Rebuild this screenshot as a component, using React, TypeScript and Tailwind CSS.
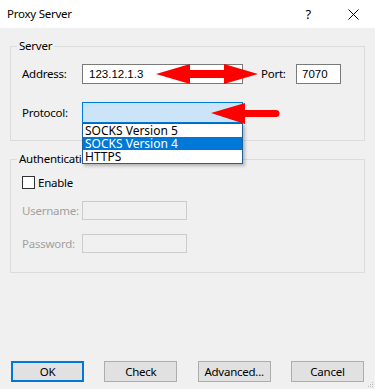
import React from 'react';

const font = { fontFamily: '"Noto Sans", "Open Sans", sans-serif' };
const fieldFont = { fontFamily: '"Liberation Sans", sans-serif' };

const Button: React.FC<{ label: string; primary?: boolean }> = ({ label, primary }) => (
  <button
    className={`w-[73px] h-[21px] bg-[#e1e1e1] text-[11.5px] leading-[17px] text-black ${
      primary ? 'border-2 border-[#0078d7]' : 'border border-[#adadad]'
    }`}
  >
    {label}
  </button>
);

const App: React.FC = () => {
  const protocols = ['SOCKS Version 5', 'SOCKS Version 4', 'HTTPS'];

  return (
    <div className="relative w-[375px] h-[389px] bg-[#f0f0f0] flex flex-col text-[11.5px] tracking-[-0.25px] text-black overflow-hidden" style={font}>
      {/* title bar */}
      <div className="h-[28px] bg-white flex items-center pl-[7px] shrink-0">
        <span className="leading-[14px]">Proxy Server</span>
        <span className="ml-auto mr-[37px] text-[13px] leading-[14px]">?</span>
        <svg width="11" height="11" viewBox="0 0 11 11" className="mr-[16px]">
          <path d="M0.5 0.5 L10.5 10.5 M10.5 0.5 L0.5 10.5" stroke="#000" strokeWidth="1" />
        </svg>
      </div>

      {/* server group */}
      <div className="mx-[10px] mt-[18px] border border-[#dcdcdc] h-[95px] pl-[11px]">
        <span className="block w-fit -mt-[8px] -ml-[5px] px-[2px] bg-[#f0f0f0] leading-[14px]">Server</span>
        <div className="flex items-center h-[20px] mt-[11px]">
          <span className="w-[60px]">Address:</span>
          <div className="w-[161px] h-[20px] border border-[#7a7a7a] bg-white pl-[6px] leading-[18px] tracking-normal" style={fieldFont}>
            123.12.1.3
          </div>
          <span className="ml-[18px] w-[35px]">Port:</span>
          <div className="w-[45px] h-[20px] border border-[#7a7a7a] bg-white pl-[5px] leading-[18px] tracking-normal" style={fieldFont}>
            7070
          </div>
        </div>
        <div className="flex items-center h-[21px] mt-[18px]">
          <span className="w-[60px]">Protocol:</span>
          <div className="relative w-[161px] h-[21px] border border-[#0078d7] bg-[#cce4f7]">
            <ul className="absolute z-10 top-[20px] -left-[1px] w-[161px] border border-[#1f5f9e] bg-white shadow-[2px_2px_3px_rgba(0,0,0,0.25)] text-[12px] tracking-normal">
              {protocols.map((p, i) => (
                <li
                  key={p}
                  className={`h-[13px] leading-[13px] pl-[2px] ${i === 1 ? 'bg-[#0078d7] text-white' : ''}`}
                >
                  {p}
                </li>
              ))}
            </ul>
          </div>
        </div>
      </div>

      {/* authentication group */}
      <div className="mx-[10px] mt-[18px] border border-[#dcdcdc] h-[114px] pl-[11px]">
        <span className="block w-fit -mt-[8px] -ml-[5px] px-[2px] bg-[#f0f0f0] leading-[14px]">Authentication</span>
        <div className="flex items-center h-[13px] mt-[10px]">
          <span className="w-[13px] h-[13px] border border-[#333] bg-white" />
          <span className="ml-[3px]">Enable</span>
        </div>
        <div className="flex items-center h-[19px] mt-[12px] text-[#a0a0a0]">
          <span className="w-[60px]">Username:</span>
          <div className="w-[105px] h-[19px] border border-[#cccccc]" />
        </div>
        <div className="flex items-center h-[19px] mt-[14px] text-[#a0a0a0]">
          <span className="w-[60px]">Password:</span>
          <div className="w-[105px] h-[19px] border border-[#cccccc]" />
        </div>
      </div>

      {/* buttons */}
      <div className="mt-auto mb-[7px] px-[11px] flex justify-between">
        <Button label="OK" primary />
        <Button label="Check" />
        <Button label="Advanced..." />
        <Button label="Cancel" />
      </div>

      {/* resize grip */}
      <svg className="absolute right-[1px] bottom-[1px]" width="6" height="6" viewBox="0 0 6 6">
        <rect x="4" y="0" width="1" height="1" fill="#bbb" />
        <rect x="2" y="2" width="1" height="1" fill="#bbb" />
        <rect x="4" y="2" width="1" height="1" fill="#bbb" />
        <rect x="0" y="4" width="1" height="1" fill="#bbb" />
        <rect x="2" y="4" width="1" height="1" fill="#bbb" />
        <rect x="4" y="4" width="1" height="1" fill="#bbb" />
      </svg>

      {/* red annotation arrows */}
      <svg className="absolute inset-0 z-20 pointer-events-none" width="375" height="389" viewBox="0 0 375 389">
        <polygon
          points="156,74 190,64 190,70 224,70 224,64 258,74 224,84 224,78 190,78 190,84"
          fill="#ff0000"
        />
        <path d="M211,113 L245,103 L245,110 L276,110 A3.5,3.5 0 0 1 276,117 L245,117 L245,124 Z" fill="#ff0000" />
      </svg>
    </div>
  );
};

export default App;
